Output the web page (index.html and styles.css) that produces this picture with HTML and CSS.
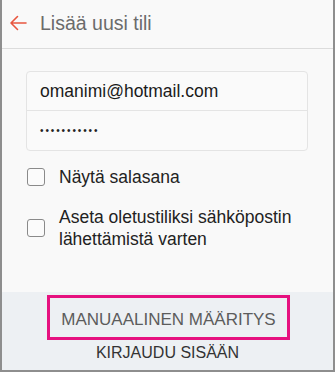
FILE: index.html
```html
<!DOCTYPE html>
<html lang="fi">
<head>
<meta charset="utf-8">
<link rel="stylesheet" href="styles.css">
</head>
<body>
<div class="frame">
  <header class="header">
    <svg class="back" width="18" height="16" viewBox="0 0 18 16" aria-hidden="true">
      <path d="M17 8H2.5M8.5 1.5L2 8l6.5 6.5" fill="none" stroke="#e8563f" stroke-width="1.6" stroke-linecap="round" stroke-linejoin="round"/>
    </svg>
    <h1 class="title">Lisää uusi tili</h1>
  </header>
  <main class="content">
    <div class="fields">
      <div class="field">omanimi@hotmail.com</div>
      <div class="field field-pass">•••••••••••</div>
    </div>
    <label class="check check-first">
      <span class="box"></span>
      <span class="check-text">Näytä salasana</span>
    </label>
    <label class="check check-second">
      <span class="box"></span>
      <span class="check-text">Aseta oletustiliksi sähköpostin<br>lähettämistä varten</span>
    </label>
  </main>
  <footer class="footer">
    <div class="manual">MANUAALINEN MÄÄRITYS</div>
    <div class="signin">KIRJAUDU SISÄÄN</div>
  </footer>
</div>
</body>
</html>
```
FILE: styles.css
```css
html, body {
  margin: 0;
  padding: 0;
}
body {
  width: 335px;
  height: 372px;
  font-family: "Liberation Sans", Arial, sans-serif;
  background: #f9f9f9;
}
.frame {
  box-sizing: border-box;
  width: 335px;
  height: 372px;
  border: 2px solid #8e8e8e;
  border-top: none;
  background: #f9f9f9;
  display: flex;
  flex-direction: column;
}
.header {
  box-sizing: border-box;
  height: 49px;
  border-bottom: 1px solid #dcdcdc;
  display: flex;
  align-items: center;
  padding-left: 7px;
  padding-bottom: 2px;
}
.back {
  display: block;
  flex: none;
}
.title {
  margin: 0 0 0 13px;
  font-size: 19.5px;
  font-weight: normal;
  color: #6b6b6b;
}
.content {
  padding: 22px 25px 0 24px;
}
.fields {
  border: 1px solid #e4e4e4;
  border-radius: 4px;
  background: #fafafa;
}
.field {
  height: 38px;
  display: flex;
  align-items: center;
  padding-left: 13px;
  font-size: 17.5px;
  color: #1a1a1a;
}
.field-pass {
  border-top: 1px solid #e4e4e4;
  height: 39px;
  font-size: 10px;
  letter-spacing: 1.9px;
  color: #222;
}
.check {
  display: flex;
  align-items: center;
  font-size: 17.5px;
  line-height: 22px;
  color: #222;
}
.check-first {
  margin-top: 15px;
}
.check-second {
  margin-top: 18px;
}
.box {
  box-sizing: border-box;
  flex: none;
  width: 18px;
  height: 18px;
  border: 1.5px solid #8a8a8a;
  border-radius: 3px;
  margin-left: 1px;
  margin-right: 14px;
  background: #fbfbfb;
}
.footer {
  margin-top: auto;
  height: 78px;
  background: #edf0f3;
  display: flex;
  flex-direction: column;
  align-items: center;
  padding-top: 3px;
  box-sizing: border-box;
}
.manual {
  box-sizing: border-box;
  width: 243px;
  height: 45px;
  margin-left: 2px;
  border: 3px solid #e6117f;
  display: flex;
  align-items: center;
  justify-content: center;
  padding-top: 4px;
  font-size: 17px;
  color: #5c5c5c;
}
.signin {
  margin-top: 3px;
  font-size: 16px;
  line-height: 20px;
  color: #333;
}
```
